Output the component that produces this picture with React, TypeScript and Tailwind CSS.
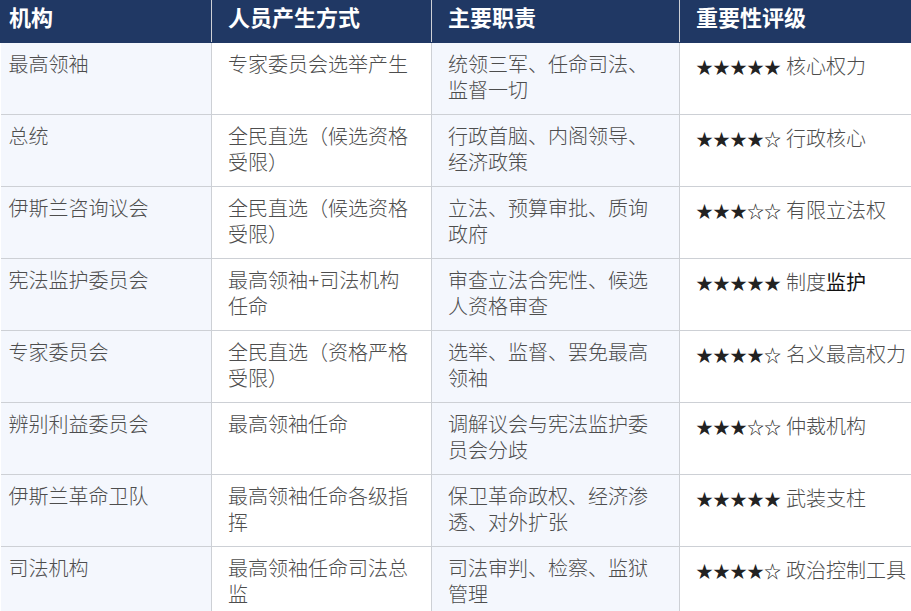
const rows: { org: string; how: string; duty: string; stars: string; note: React.ReactNode }[] = [
    { org: '最高领袖', how: '专家委员会选举产生', duty: '统领三军、任命司法、监督一切', stars: '★★★★★', note: '核心权力' },
    { org: '总统', how: '全民直选（候选资格受限）', duty: '行政首脑、内阁领导、经济政策', stars: '★★★★☆', note: '行政核心' },
    { org: '伊斯兰咨询议会', how: '全民直选（候选资格受限）', duty: '立法、预算审批、质询政府', stars: '★★★☆☆', note: '有限立法权' },
    { org: '宪法监护委员会', how: '最高领袖+司法机构任命', duty: '审查立法合宪性、候选人资格审查', stars: '★★★★★', note: <>制度<span className="text-[#111] font-normal">监护</span></> },
    { org: '专家委员会', how: '全民直选（资格严格受限）', duty: '选举、监督、罢免最高领袖', stars: '★★★★☆', note: '名义最高权力' },
    { org: '辨别利益委员会', how: '最高领袖任命', duty: '调解议会与宪法监护委员会分歧', stars: '★★★☆☆', note: '仲裁机构' },
    { org: '伊斯兰革命卫队', how: '最高领袖任命各级指挥', duty: '保卫革命政权、经济渗透、对外扩张', stars: '★★★★★', note: '武装支柱' },
    { org: '司法机构', how: '最高领袖任命司法总监', duty: '司法审判、检察、监狱管理', stars: '★★★★☆', note: '政治控制工具' },
];

const cell = 'border border-[#cdd0d5] align-top pt-[9px] pb-[10px] pr-4 text-[20px] leading-[26px] font-light text-[#4d4d4d]';

export default function App() {
    return (
        <div className="w-[911px] h-[611px] overflow-hidden bg-white" style={{ fontFamily: '"Liberation Serif", "Noto Sans CJK SC", serif' }}>
            <table className="border-collapse table-fixed w-[930px] -mt-px">
                <colgroup>
                    <col className="w-[211px]" />
                    <col className="w-[220px]" />
                    <col className="w-[248px]" />
                    <col className="w-[251px]" />
                </colgroup>
                <thead>
                    <tr className="bg-[#203864] text-white">
                        <th className="border border-[#203864] border-r-[#cdd0d5] text-left font-bold text-[22px] leading-[26px] pl-2 pt-[6px] pb-[10px]">机构</th>
                        <th className="border border-[#203864] border-r-[#cdd0d5] text-left font-bold text-[22px] leading-[26px] pl-4 pt-[6px] pb-[10px]">人员产生方式</th>
                        <th className="border border-[#203864] border-r-[#cdd0d5] text-left font-bold text-[22px] leading-[26px] pl-4 pt-[6px] pb-[10px]">主要职责</th>
                        <th className="border border-[#203864] text-left font-bold text-[22px] leading-[26px] pl-4 pt-[6px] pb-[10px]">重要性评级</th>
                    </tr>
                </thead>
                <tbody>
                    {rows.map((r) => (
                        <tr key={r.org}>
                            <td className={`${cell} pl-2 bg-[#f4f7fd] border-l-0`}>{r.org}</td>
                            <td className={`${cell} pl-4 bg-white`}>{r.how}</td>
                            <td className={`${cell} pl-4 bg-[#f4f7fd]`}>{r.duty}</td>
                            <td className={`${cell} pl-4 bg-white pt-[11px] whitespace-nowrap`}>
                                <span className="text-[#222] text-[17px] font-normal">{r.stars}</span> {r.note}
                            </td>
                        </tr>
                    ))}
                </tbody>
            </table>
        </div>
    );
}
